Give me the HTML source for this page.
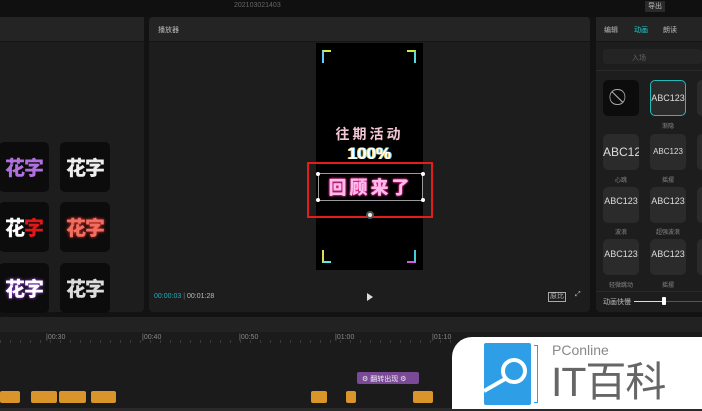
<!DOCTYPE html><html><head><meta charset="utf-8"><style>
*{margin:0;padding:0;box-sizing:border-box}
body{width:702px;height:411px;background:#121212;position:relative;overflow:hidden;font-family:"Liberation Sans","Noto Sans CJK SC",sans-serif;color:#ccc}
.a{position:absolute}
.s{font-size:7px;color:#bbb}
.tile{position:absolute;width:50px;height:50px;background:#0c0c0c;border-radius:5px;font-weight:900;font-size:20px;text-align:center;line-height:50px;font-family:"Noto Sans CJK SC",sans-serif;letter-spacing:-1px}
.rt{position:absolute;width:36px;height:36px;background:#2b2b2b;border-radius:5px;font-size:9px;color:#ddd;text-align:center;line-height:36px;overflow:hidden;white-space:nowrap}
.lb{position:absolute;font-size:6px;color:#888;width:36px;text-align:center}
.ora{position:absolute;top:391px;height:12px;background:#d9942a;border-radius:2px}
</style></head><body>
<div class="a" style="left:0;top:0;width:702px;height:17px;background:#101010"></div>
<div class="a s" style="left:234px;top:2px;color:#666">202103021403</div>
<div class="a s" style="left:645px;top:1px;width:20px;height:11px;background:#2a2a2a;text-align:center;line-height:11px">导出</div>
<div class="a" style="left:0;top:17px;width:144px;height:295px;background:#1d1d1d;border-radius:0 4px 4px 0"></div>
<div class="a" style="left:0;top:17px;width:144px;height:25px;background:#242424;border-bottom:1px solid #151515"></div>
<div class="tile" style="left:-1px;top:142px;color:#b070e0">花字</div>
<div class="tile" style="left:60px;top:142px;color:#eee">花字</div>
<div class="tile" style="left:-1px;top:202px;color:#fff">花<span style="color:#e01818">字</span></div>
<div class="tile" style="left:60px;top:202px;color:#f07060;text-shadow:0 0 3px #f33">花字</div>
<div class="tile" style="left:-1px;top:263px;color:#fff;text-shadow:0 0 3px #a4f">花字</div>
<div class="tile" style="left:60px;top:263px;color:#ddd">花字</div>
<div class="a" style="left:149px;top:17px;width:441px;height:295px;background:#1d1d1d;border-radius:4px"></div>
<div class="a" style="left:149px;top:17px;width:441px;height:25px;background:#242424;border-bottom:1px solid #151515;border-radius:4px 4px 0 0"></div>
<div class="a s" style="left:158px;top:25px">播放器</div>
<div class="a" style="left:316px;top:43px;width:107px;height:227px;background:#000"></div>
<div class="a" style="left:322px;top:50px;width:9px;height:13px;border-left:2px solid #6cf;border-top:2px solid #ce4"></div>
<div class="a" style="left:407px;top:50px;width:9px;height:13px;border-right:2px solid #5dd;border-top:2px solid #ce4"></div>
<div class="a" style="left:322px;top:250px;width:9px;height:13px;border-left:2px solid #dd5;border-bottom:2px solid #5ee"></div>
<div class="a" style="left:407px;top:250px;width:9px;height:13px;border-right:2px solid #4cd;border-bottom:2px solid #d5d"></div>
<div class="a" style="left:316px;top:124px;width:107px;text-align:center;font-size:14px;font-weight:bold;color:#f3c6d6;letter-spacing:3px;font-family:'Noto Sans CJK SC',sans-serif">往期活动</div>
<div class="a" style="left:316px;top:144px;width:107px;text-align:center;font-size:17px;font-weight:900;color:#fff;text-shadow:-1px 0 #ec6,1px 0 #6ce">100%</div>
<div class="a" style="left:307px;top:162px;width:126px;height:56px;border:2px solid #e31c1c"></div>
<div class="a" style="left:318px;top:173px;width:105px;height:28px;border:1px solid #999"></div>
<div class="a" style="left:316px;top:172px;width:4px;height:4px;background:#fff;border-radius:2px"></div>
<div class="a" style="left:421px;top:172px;width:4px;height:4px;background:#fff;border-radius:2px"></div>
<div class="a" style="left:316px;top:198px;width:4px;height:4px;background:#fff;border-radius:2px"></div>
<div class="a" style="left:421px;top:198px;width:4px;height:4px;background:#fff;border-radius:2px"></div>
<div class="a" style="left:318px;top:174px;width:105px;text-align:center;font-size:18px;font-weight:900;color:#fbe;text-shadow:0 0 2px #f39,0 0 2px #f39;letter-spacing:3px;font-family:'Noto Sans CJK SC',sans-serif">回顾来了</div>
<div class="a" style="left:366px;top:211px;width:8px;height:8px;background:#eee;border-radius:4px;border:2px solid #555"></div>
<div class="a s" style="left:154px;top:293px;color:#2ab"><span>00:00:03</span> <span style="color:#777">|</span> <span style="color:#bbb">00:01:28</span></div>
<div class="a" style="left:367px;top:293px;width:0;height:0;border-left:6px solid #ddd;border-top:4px solid transparent;border-bottom:4px solid transparent"></div>
<div class="a s" style="left:548px;top:292px;border:1px solid #aaa;padding:0 1px;line-height:8px">原比</div>
<div class="a s" style="left:575px;top:291px">⤢</div>
<div class="a" style="left:596px;top:17px;width:110px;height:295px;background:#1d1d1d;border-radius:4px"></div>
<div class="a" style="left:596px;top:17px;width:110px;height:25px;background:#242424;border-bottom:1px solid #151515"></div>
<div class="a s" style="left:604px;top:25px">编辑</div>
<div class="a s" style="left:634px;top:25px;color:#2cc">动画</div>
<div class="a s" style="left:663px;top:25px">朗读</div>
<div class="a" style="left:603px;top:49px;width:99px;height:15px;background:#242424;border-radius:3px"></div>
<div class="a s" style="left:632px;top:53px;color:#666">入场</div>
<div class="a" style="left:596px;top:70px;width:106px;height:1px;background:#2a2a2a"></div>
<div class="rt" style="left:603px;top:80px;background:#0c0c0c;font-size:16px;color:#aaa">⃠</div>
<div class="rt" style="left:650px;top:80px;border:1px solid #2bb;line-height:34px">ABC123</div>
<div class="rt" style="left:697px;top:80px"></div>
<div class="lb" style="left:650px;top:121px">渐隐</div>
<div class="rt" style="left:603px;top:134px;font-size:12px">ABC123</div>
<div class="rt" style="left:650px;top:134px;font-size:8px">ABC123</div>
<div class="rt" style="left:697px;top:134px"></div>
<div class="lb" style="left:603px;top:175px">心跳</div><div class="lb" style="left:650px;top:175px">摇摆</div>
<div class="rt" style="left:603px;top:187px;line-height:28px">ABC123</div>
<div class="rt" style="left:650px;top:187px;line-height:28px">ABC123</div>
<div class="rt" style="left:697px;top:187px"></div>
<div class="lb" style="left:603px;top:227px">波浪</div><div class="lb" style="left:650px;top:227px">超强波浪</div>
<div class="rt" style="left:603px;top:239px;line-height:30px">ABC123</div>
<div class="rt" style="left:650px;top:239px;line-height:30px">ABC123</div>
<div class="rt" style="left:697px;top:239px"></div>
<div class="lb" style="left:603px;top:280px">轻微跳动</div><div class="lb" style="left:650px;top:280px">摇摆</div>
<div class="a" style="left:596px;top:291px;width:106px;height:1px;background:#2a2a2a"></div>
<div class="a s" style="left:603px;top:297px">动画快慢</div>
<div class="a" style="left:634px;top:301px;width:68px;height:1px;background:#555"></div>
<div class="a" style="left:634px;top:301px;width:30px;height:1px;background:#ddd"></div>
<div class="a" style="left:662px;top:297px;width:4px;height:8px;background:#fff;border-radius:1px"></div>
<div class="a" style="left:0;top:317px;width:702px;height:15px;background:#222"></div>
<div class="a" style="left:0;top:332px;width:702px;height:79px;background:#1b1b1b"></div>
<div class="a" style="left:0;top:340px;width:702px;height:3px;background:repeating-linear-gradient(90deg,#3a3a3a 0 1px,transparent 1px 10px)"></div>
<div class="a s" style="left:46px;top:334px;color:#888">|00:30</div>
<div class="a s" style="left:142px;top:334px;color:#888">|00:40</div>
<div class="a s" style="left:239px;top:334px;color:#888">|00:50</div>
<div class="a s" style="left:335px;top:334px;color:#888">|01:00</div>
<div class="a s" style="left:432px;top:334px;color:#888">|01:10</div>
<div class="ora" style="left:0;width:20px"></div>
<div class="ora" style="left:31px;width:26px"></div>
<div class="ora" style="left:59px;width:27px"></div>
<div class="ora" style="left:91px;width:25px"></div>
<div class="ora" style="left:311px;width:16px"></div>
<div class="ora" style="left:346px;width:10px"></div>
<div class="ora" style="left:413px;width:20px"></div>
<div class="a" style="left:357px;top:372px;width:62px;height:12px;background:#7a4a96;border-radius:2px"></div>
<div class="a s" style="left:362px;top:374px;color:#eee">⚙ 翻转出现 ⚙</div>
<div class="a" style="left:0;top:408px;width:702px;height:3px;background:#2a2a2a"></div>
<div class="a" style="left:452px;top:337px;width:250px;height:72px;background:#fff;border-radius:20px 0 0 0"></div>
<div class="a" style="left:484px;top:343px;width:47px;height:62px;background:#2e9fe6;border-radius:2px"></div>
<div class="a" style="left:534px;top:345px;width:4px;height:58px;border:1px solid #2e9fe6;border-left:none"></div>
<svg class="a" style="left:484px;top:343px" width="47" height="62"><circle cx="30" cy="28" r="11" fill="none" stroke="#fff" stroke-width="4"/><line x1="21" y1="36" x2="0" y2="48" stroke="#fff" stroke-width="4"/></svg>
<div class="a" style="left:552px;top:342px;font-size:14px;color:#888">PConline</div>
<div class="a" style="left:551px;top:357px;font-size:41px;color:#666;line-height:50px;letter-spacing:-1px;font-family:'Liberation Sans','Noto Sans CJK SC',sans-serif">IT百科</div>
</body></html>
